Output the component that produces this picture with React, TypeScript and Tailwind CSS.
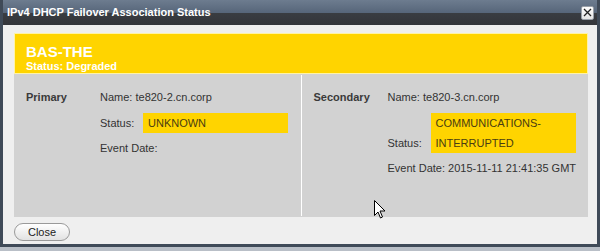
import React from "react";

const font = { fontFamily: '"Liberation Sans", Arial, sans-serif' };

function Row({
  label,
  name,
  status,
  date,
}: {
  label: string;
  name: string;
  status: string;
  date: string;
}) {
  return (
    <div className="flex flex-1 pl-[12px] pt-[17px] text-[11px] text-[#333]">
      <div className="w-[74px] font-bold leading-[13px] text-[#3a3a3a]">{label}</div>
      <div className="flex flex-col">
        <div className="leading-[13px]">{name}</div>
        <div className="mt-[9px] flex items-end">
          <div className="w-[43px] leading-[20px]">Status:</div>
          <div className="w-[145px] bg-[#ffd400] px-[5px] leading-[20px] text-[#4a3d12]">{status}</div>
        </div>
        <div className="mt-[9px] leading-[13px]">{date}</div>
      </div>
    </div>
  );
}

export default function App() {
  return (
    <div className="relative h-[251px] w-[600px] overflow-hidden bg-[#b9bfc7]" style={font}>
      <div className="flex h-[247px] w-[600px] flex-col border-x-[3px] border-b-[3px] border-[#3f4a58]">
        <div className="flex h-[25px] items-center justify-between bg-[linear-gradient(to_bottom,#6d7c8f_0%,#57667a_50%,#393c41_54%,#33353a_100%)] pl-[4px] pr-[3px]">
          <div className="text-[11px] font-bold text-white">IPv4 DHCP Failover Association Status</div>
          <div className="flex h-[14px] w-[13px] items-center justify-center rounded-[2px] border border-[#9aa0a8] bg-[linear-gradient(to_bottom,#ffffff,#e4e4e4)]">
            <svg width="9" height="9" viewBox="0 0 9 9">
              <path d="M1 1 L8 8 M8 1 L1 8" stroke="#222" strokeWidth="1.3" />
            </svg>
          </div>
        </div>
        <div className="flex flex-1 flex-col bg-[#efefef] pl-[11px] pr-[9px] pt-[8px]">
          <div className="h-[41px] border border-[#fff3a6] bg-[#ffd400] pl-[11px] pt-[10px] text-white">
            <div className="text-[15px] font-bold leading-[16px]">BAS-THE</div>
            <div className="text-[11px] font-bold leading-[12px]">Status: Degraded</div>
          </div>
          <div className="flex h-[143px] bg-[#d2d2d2]">
            <Row label="Primary" name="Name: te820-2.cn.corp" status="UNKNOWN" date="Event Date:" />
            <div className="my-[1px] w-px bg-white" />
            <Row
              label="Secondary"
              name="Name: te820-3.cn.corp"
              status="COMMUNICATIONS-INTERRUPTED"
              date="Event Date: 2015-11-11 21:41:35 GMT"
            />
          </div>
          <div className="pt-[6px]">
            <button className="flex h-[18px] w-[56px] items-center justify-center rounded-full border border-[#9a9a9a] bg-[linear-gradient(to_bottom,#ffffff,#e2e2e2)] text-[11px] text-[#222]">
              Close
            </button>
          </div>
        </div>
      </div>
      <svg className="absolute left-[374px] top-[200px]" width="12" height="19" viewBox="0 0 12 19">
        <path d="M0.5 0.5 L0.5 15.5 L4 12 L6.5 18 L8.5 17 L6 11 L11 11 Z" fill="#fff" stroke="#000" strokeWidth="1" />
      </svg>
    </div>
  );
}
